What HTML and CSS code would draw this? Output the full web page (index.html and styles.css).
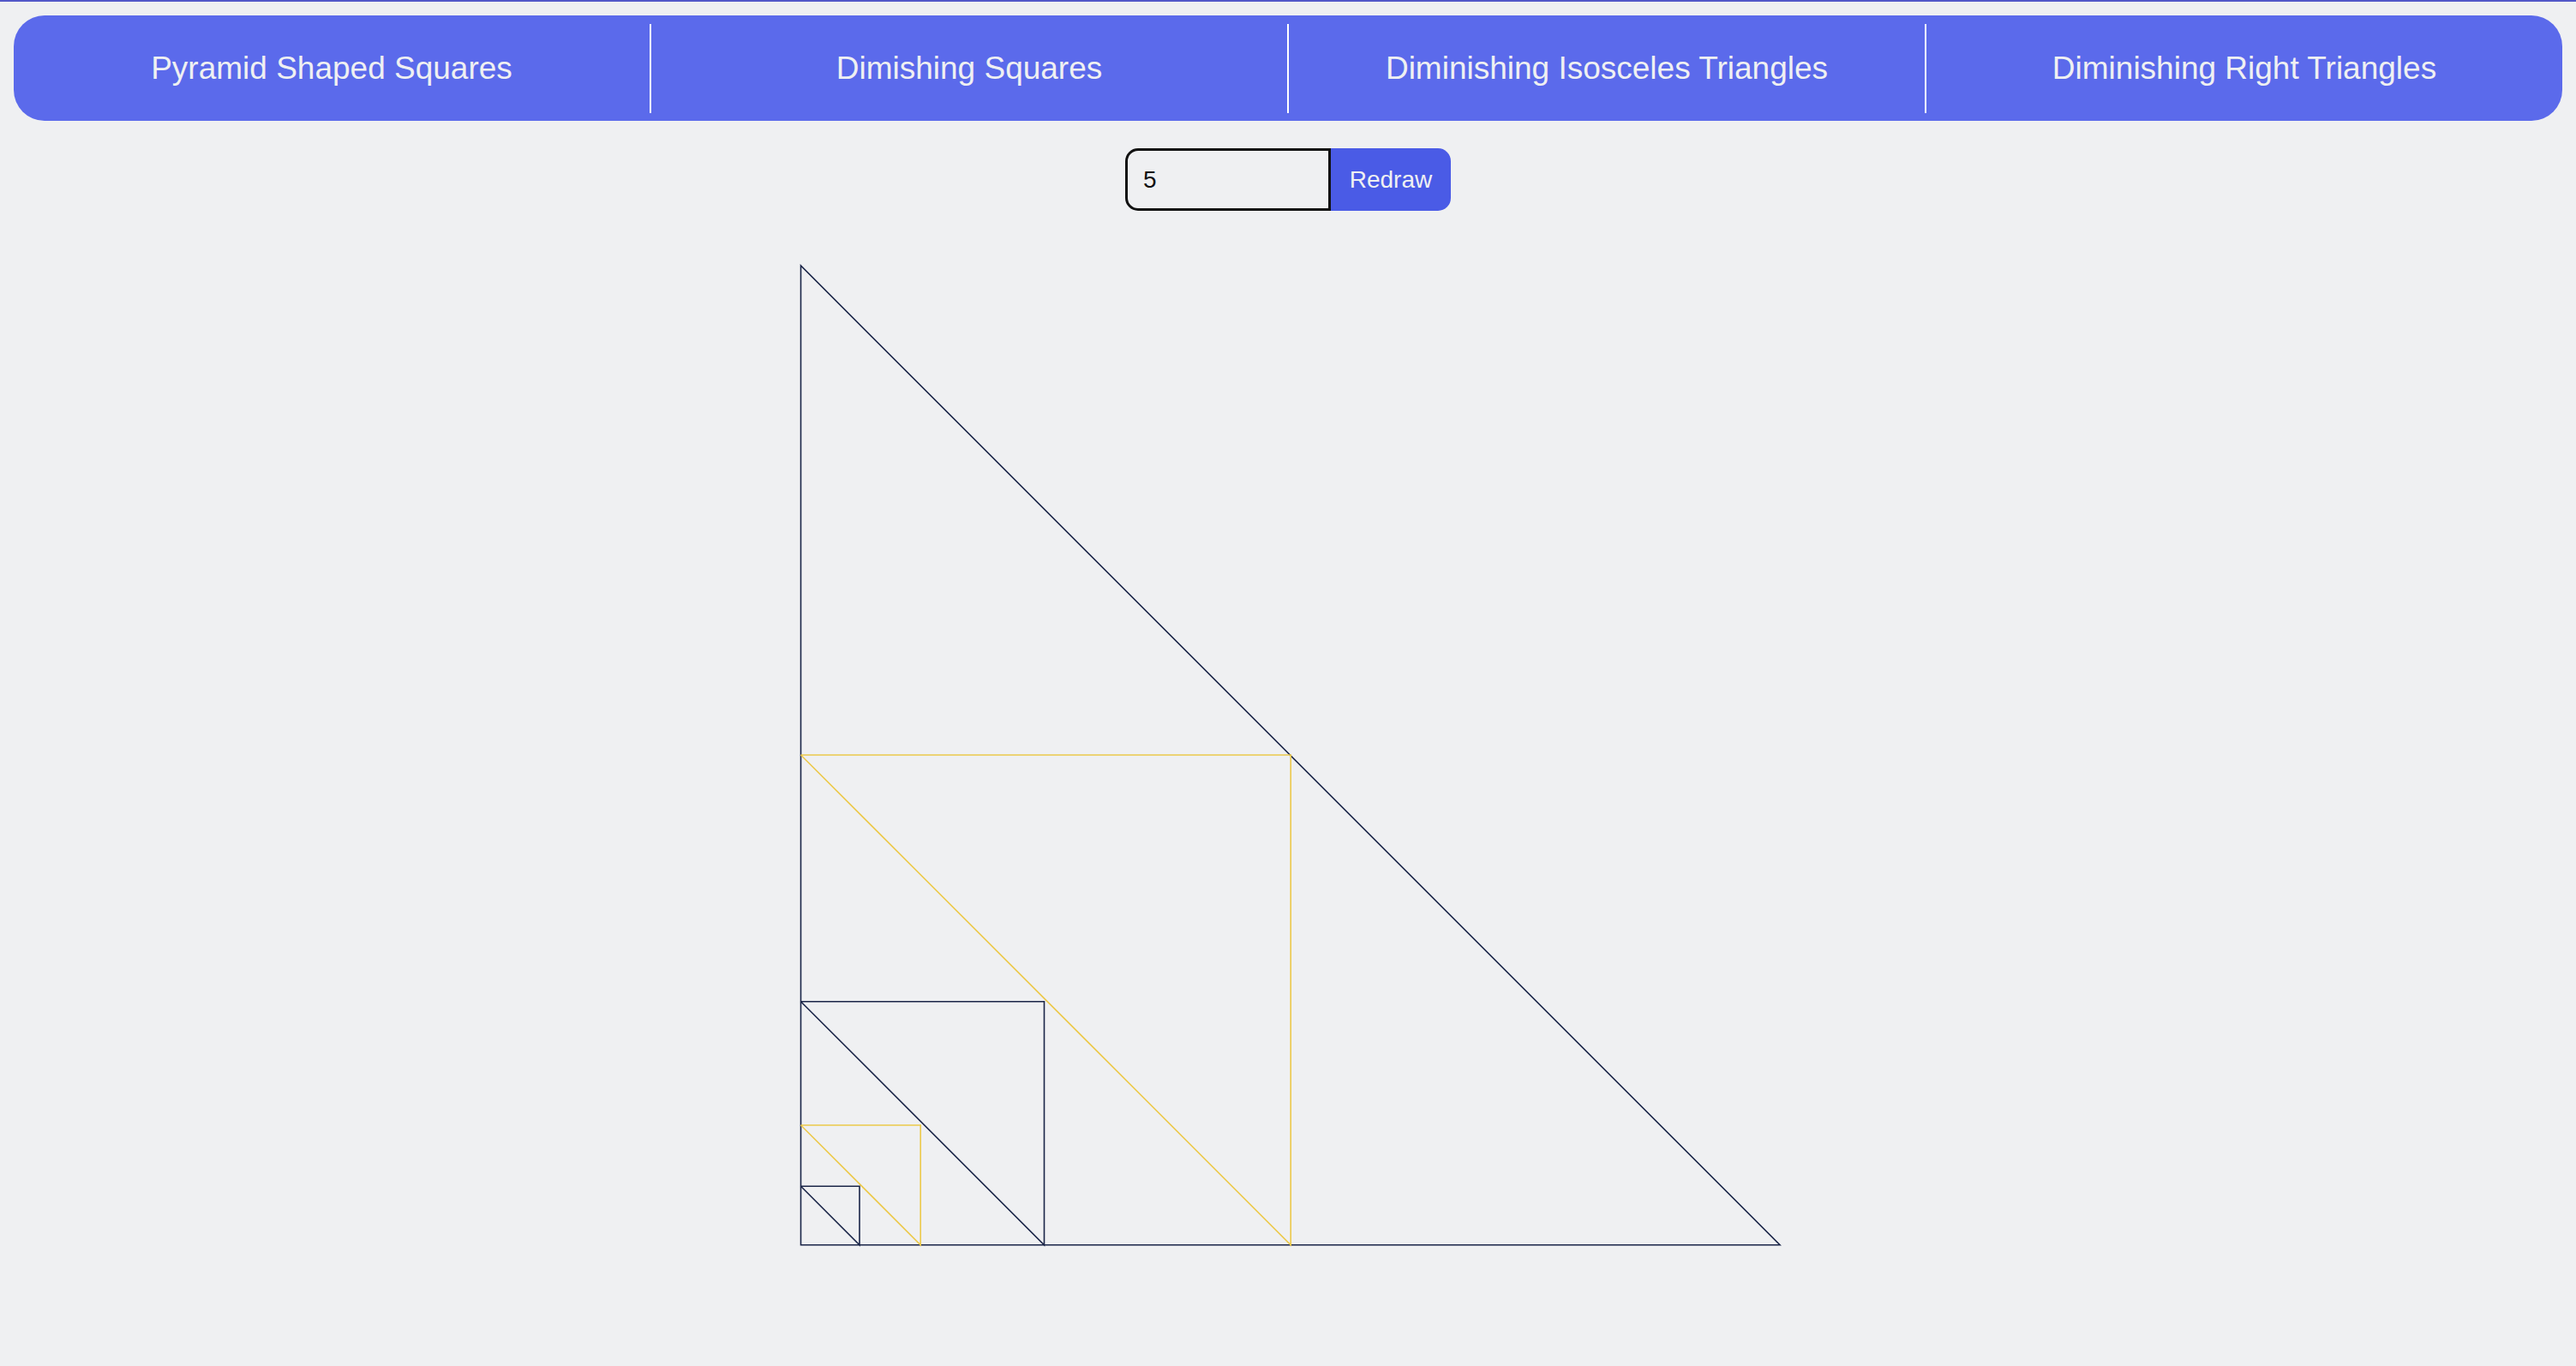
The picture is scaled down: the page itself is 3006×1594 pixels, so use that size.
FILE: index.html
```html
<!DOCTYPE html>
<html lang="en">
<head>
<meta charset="utf-8">
<title>Diminishing Right Triangles</title>
<link rel="stylesheet" href="styles.css">
</head>
<body>
<nav class="nav">
  <a class="nav-item" href="#">Pyramid Shaped Squares</a>
  <a class="nav-item sep" href="#">Dimishing Squares</a>
  <a class="nav-item sep" href="#">Diminishing Isosceles Triangles</a>
  <a class="nav-item sep" href="#">Diminishing Right Triangles</a>
</nav>
<div class="controls">
  <input class="count" type="text" value="5">
  <button class="redraw">Redraw</button>
</div>
<svg class="canvas" width="1160" height="1160" viewBox="0 0 1160 1160">
  <g fill="none" stroke-width="1.6">
    <path class="navy" d="M11.5 4 L11.5 1146.7 L1154 1146.7 Z"/>
    <path class="gold" d="M11.5 575 L583.2 575 L583.2 1146.7 L11.5 575"/>
    <path class="navy" d="M11.5 862.7 L295.5 862.7 L295.5 1146.7 L11.5 862.7"/>
    <path class="gold" d="M11.5 1007 L151.2 1007 L151.2 1146.7 L11.5 1007"/>
    <path class="navy" d="M11.5 1078.2 L80 1078.2 L80 1146.7 L11.5 1078.2"/>
  </g>
</svg>
</body>
</html>
```
FILE: styles.css
```css
html, body {
  margin: 0;
  padding: 0;
}
body {
  background: #eff0f2;
  border-top: 2px solid #5258c8;
  font-family: "Liberation Sans", Arial, sans-serif;
  min-height: 1592px;
  box-sizing: border-box;
}
.nav {
  display: flex;
  margin: 16px 16px 0;
  height: 123px;
  box-sizing: border-box;
  padding: 10px 0 9px;
  background: #5b6aeb;
  border-radius: 36px;
}
.nav-item {
  flex: 1;
  display: flex;
  align-items: center;
  justify-content: center;
  color: #eff0f2;
  text-decoration: none;
  font-size: 37px;
}
.nav-item.sep {
  border-left: 2px solid #ffffff;
}
.controls {
  display: flex;
  justify-content: center;
  margin-top: 32px;
}
.count {
  box-sizing: border-box;
  width: 240px;
  height: 73px;
  border: 3px solid #111111;
  border-radius: 15px 0 0 15px;
  background: transparent;
  padding: 0 0 0 18px;
  font-family: "Liberation Sans", Arial, sans-serif;
  font-size: 28px;
  color: #111111;
  outline: none;
}
.redraw {
  box-sizing: border-box;
  width: 140px;
  height: 73px;
  border: none;
  border-radius: 0 15px 15px 0;
  background: #4a5be6;
  color: #eff0f2;
  font-family: "Liberation Sans", Arial, sans-serif;
  font-size: 28px;
  padding: 0;
}
.canvas {
  display: block;
  margin: 60px auto 0;
}
.navy {
  stroke: #1a2548;
}
.gold {
  stroke: #ecc94b;
}
```
